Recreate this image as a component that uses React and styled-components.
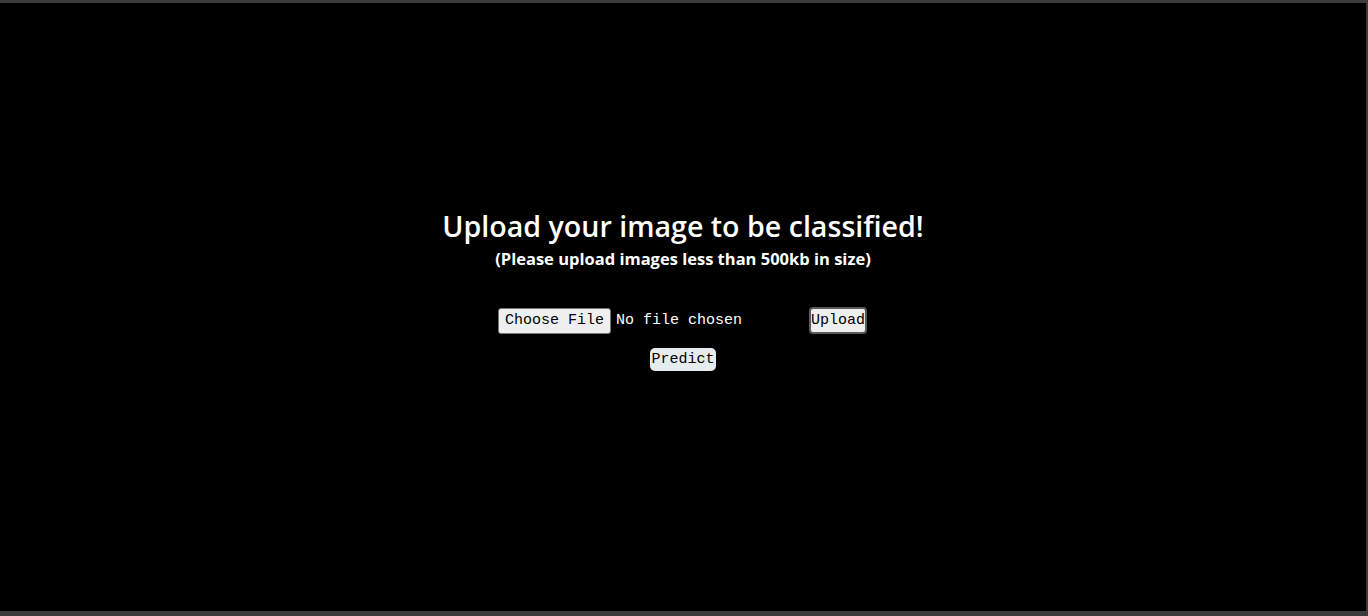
import React from "react";
import styled, { createGlobalStyle } from "styled-components";

const Global = createGlobalStyle`
  html, body { margin: 0; padding: 0; background: #3c3c3c; }
  body { width: 1368px; height: 616px; overflow: hidden; }
`;

const Frame = styled.main`
  box-sizing: border-box;
  margin-top: 3px;
  width: 1366px;
  height: 608px;
  background: #000;
  display: flex;
  flex-direction: column;
  align-items: center;
  padding-top: 202px;
  font-family: "Open Sans", "Noto Sans", sans-serif;
  color: #fff;
`;

const Title = styled.h1`
  margin: 0;
  font-size: 28.6px;
  font-weight: 600;
  line-height: 42px;
`;

const Subtitle = styled.h2`
  margin: 0;
  font-size: 16.5px;
  font-weight: 700;
  line-height: 24px;
`;

const Form = styled.form`
  margin-top: 36px;
  display: flex;
  flex-direction: column;
  align-items: center;
  gap: 14px;
`;

const Row = styled.div`
  display: flex;
  align-items: center;
  margin-left: -1px;
`;

const Mono = `
  font-family: "Liberation Mono", "Courier New", monospace;
  font-size: 15px;
  color: #000;
  white-space: nowrap;
`;

const FileButton = styled.label`
  ${Mono}
  box-sizing: border-box;
  flex: none;
  height: 26px;
  width: 113px;
  padding: 0;
  display: inline-flex;
  align-items: center;
  justify-content: center;
  background: #efefef;
  border: 1px solid #767676;
  border-radius: 3px;
  cursor: pointer;
`;

const FileText = styled.span`
  ${Mono}
  flex: none;
  color: #fff;
  margin-left: 5px;
  width: 193px;
`;

const Button = styled.button`
  ${Mono}
  box-sizing: border-box;
  flex: none;
  padding: 0;
  display: inline-flex;
  align-items: center;
  justify-content: center;
  width: ${(p) => p.$w}px;
  height: ${(p) => p.$h}px;
  background: ${(p) => p.$bg};
  border: ${(p) => p.$border};
  border-radius: ${(p) => p.$radius}px;
  cursor: pointer;
`;

export default function App() {
  return (
    <>
      <Global />
      <Frame>
        <Title>Upload your image to be classified!</Title>
        <Subtitle>(Please upload images less than 500kb in size)</Subtitle>
        <Form onSubmit={(e) => e.preventDefault()}>
          <Row>
            <FileButton>Choose File</FileButton>
            <FileText>No file chosen</FileText>
            <Button $w={58} $h={27} $bg="#efefef" $border="2px solid #5a5a5a" $radius={4}>
              Upload
            </Button>
          </Row>
          <Button $w={66} $h={23} $bg="#e6edf0" $border="none" $radius={5}>
            Predict
          </Button>
        </Form>
      </Frame>
    </>
  );
}
